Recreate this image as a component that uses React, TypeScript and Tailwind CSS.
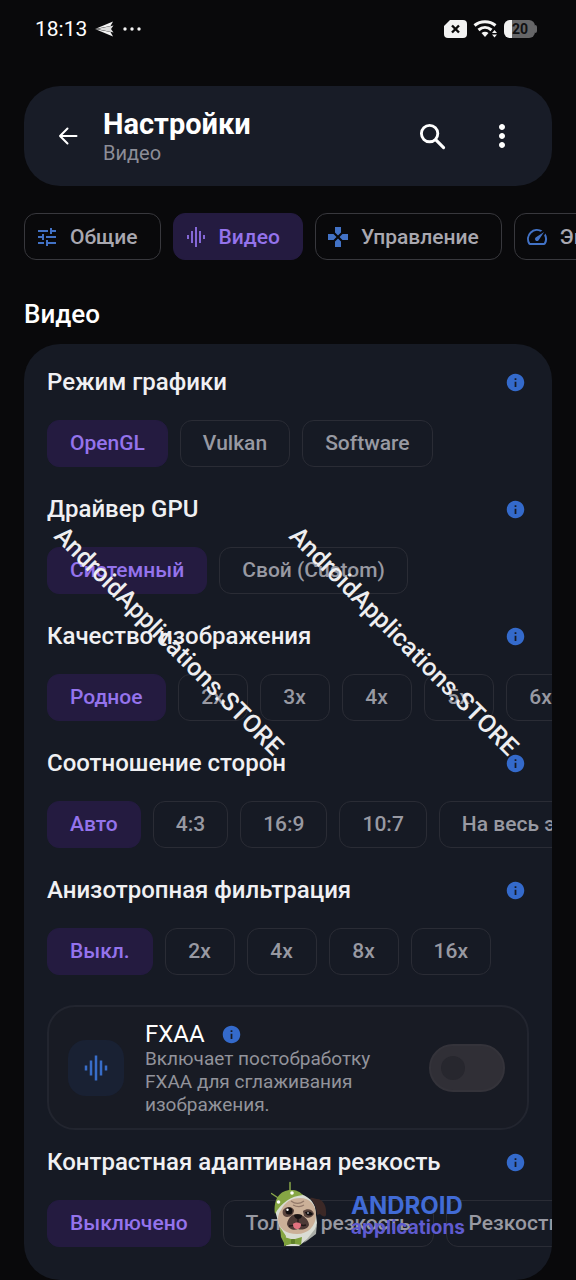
import { useState } from "react";
import type { ComponentType } from "react";
import {
  MdGamepad,
  MdGraphicEq,
  MdInfo,
  MdMoreVert,
  MdOutlineSpeed,
  MdTune,
} from "react-icons/md";

type Tab = {
  label: string;
  icon: ComponentType<{ size?: number; className?: string }>;
};

const tabs: Tab[] = [
  { label: "Общие", icon: MdTune },
  { label: "Видео", icon: MdGraphicEq },
  { label: "Управление", icon: MdGamepad },
  { label: "Эмуляция", icon: MdOutlineSpeed },
];

const groups = [
  { title: "Режим графики", options: ["OpenGL", "Vulkan", "Software"] },
  { title: "Драйвер GPU", options: ["Системный", "Свой (Custom)"] },
  {
    title: "Качество изображения",
    options: ["Родное", "2x", "3x", "4x", "5x", "6x"],
  },
  {
    title: "Соотношение сторон",
    options: ["Авто", "4:3", "16:9", "10:7", "На весь экран"],
  },
  {
    title: "Анизотропная фильтрация",
    options: ["Выкл.", "2x", "4x", "8x", "16x"],
  },
];

const sharpness = {
  title: "Контрастная адаптивная резкость",
  options: ["Выключено", "Только резкость", "Резкость и масштаб"],
};

function StatusBar() {
  return (
    <div className="flex h-[58px] items-center justify-between pr-[39px] pl-[35px] text-white">
      <div className="flex items-center gap-2">
        <span className="pt-0.5 text-[21px]">18:13</span>
        <svg width="20" height="16" viewBox="0 0 20 16" aria-hidden="true">
          <path d="M0 8 18 .5 15.500 5z" fill="#f4f4f4" />
          <path d="M0 8 18 15.500 15.500 11z" fill="#f4f4f4" />
          <path d="m2 8 16.500-3.500L16 8l2.500 3.500z" fill="#dcdcdc" />
        </svg>
        <svg width="18" height="4" viewBox="0 0 18 4" fill="#f4f4f4" aria-hidden="true">
          <circle cx="2" cy="2" r="1.700" />
          <circle cx="9" cy="2" r="1.700" />
          <circle cx="16" cy="2" r="1.700" />
        </svg>
      </div>
      <div className="flex items-center gap-1.5">
        <svg width="23" height="18" viewBox="0 0 23 18" aria-hidden="true">
          <path
            d="M6 0h13a4 4 0 0 1 4 4v10a4 4 0 0 1-4 4H4a4 4 0 0 1-4-4V6z"
            fill="#f2f2f2"
          />
          <path d="m8 5.500 7 7m0-7-7 7" stroke="#0a0a0b" strokeWidth="2.400" />
        </svg>
        <svg width="25" height="18" viewBox="0 0 25 18" fill="none" aria-hidden="true">
          <path d="M1.500 5.500c6-5 15-5 21 0" stroke="#f4f4f4" strokeWidth="3" />
          <path d="M5.500 10c4-3.500 9-3.500 13 0" stroke="#f4f4f4" strokeWidth="3" />
          <path d="M8.500 13c2-1.700 5-1.700 7 0L12 17z" fill="#f4f4f4" />
          <path d="m19 13 2.500-3 2.500 3zM19 14.500l2.500 3 2.500-3z" fill="#f4f4f4" />
        </svg>
        <div className="flex items-center">
          <div className="flex h-[18px] w-[31px] items-center overflow-hidden rounded-md bg-[#666668]">
            <span className="h-full w-2 bg-[#f2f2f2]" />
            <span className="text-sm leading-none font-bold text-[#111113]">20</span>
          </div>
          <span className="h-2 w-0.5 rounded-r bg-[#666668]" />
        </div>
      </div>
    </div>
  );
}

function Header() {
  return (
    <header className="mx-6 mt-7 flex h-[100px] items-center rounded-[36px] bg-[#181c27] pr-[26px] pl-4">
      <button
        type="button"
        aria-label="Назад"
        className="flex size-14 items-center justify-center rounded-2xl text-white"
      >
        <svg width="20" height="18" viewBox="0 0 20 18" fill="none" aria-hidden="true">
          <path
            d="M18.500 9H2m7.500-7.500L2 9l7.500 7.500"
            stroke="currentColor"
            strokeWidth="2"
            strokeLinecap="round"
            strokeLinejoin="round"
          />
        </svg>
      </button>
      <div className="ml-[7px] flex-1 pt-0.5">
        <h1 className="text-[29px] leading-8 font-bold text-white">Настройки</h1>
        <p className="text-xl leading-[26px] text-[#8c8d97]">Видео</p>
      </div>
      <button type="button" aria-label="Поиск" className="flex size-12 items-center justify-center text-white">
        <svg width="27" height="27" viewBox="0 0 28 28" fill="none" aria-hidden="true">
          <circle cx="11" cy="11" r="8.500" stroke="currentColor" strokeWidth="3" />
          <path d="m17.500 17.500 8 8" stroke="currentColor" strokeWidth="3.200" strokeLinecap="round" />
        </svg>
      </button>
      <button type="button" aria-label="Ещё" className="ml-[22px] flex size-12 items-center justify-center text-white">
        <MdMoreVert size={36} />
      </button>
    </header>
  );
}

function Tabs() {
  const [active, setActive] = useState("Видео");

  return (
    <nav className="mt-[27px] flex gap-3 overflow-x-auto px-6 [scrollbar-width:none]">
      {tabs.map(({ label, icon: Icon }) => {
        const selected = label === active;
        return (
          <button
            key={label}
            type="button"
            aria-pressed={selected}
            onClick={() => setActive(label)}
            className={`flex h-[47px] shrink-0 items-center gap-[11px] rounded-xl border pr-[22px] pl-2.5 text-[21px] font-medium ${
              selected
                ? "border-[#241b40] bg-[#241b40] text-[#9473ec]"
                : "border-[#38383d] text-[#a9a8b0]"
            }`}
          >
            <Icon size={24} className={selected ? "text-[#8467d6]" : "text-[#4272c6]"} />
            <span className="pt-0.5">{label}</span>
          </button>
        );
      })}
    </nav>
  );
}

function InfoButton({ about }: { about: string }) {
  return (
    <button type="button" aria-label={`Справка: ${about}`} className="text-[#346acb]">
      <MdInfo size={21} />
    </button>
  );
}

function OptionGroup({ title, options }: { title: string; options: string[] }) {
  const [value, setValue] = useState(options[0]);

  return (
    <section>
      <div className="flex h-[30px] items-center justify-between pr-[26px]">
        <h3 className="text-2xl font-medium text-[#f0f0f3]">{title}</h3>
        <InfoButton about={title} />
      </div>
      <div className="mt-[23px] flex gap-3 overflow-x-auto [scrollbar-width:none]">
        {options.map((option) => (
          <button
            key={option}
            type="button"
            aria-pressed={option === value}
            onClick={() => setValue(option)}
            className={`h-[47px] min-w-[70px] shrink-0 rounded-xl border px-[22px] text-[21px] font-medium whitespace-nowrap ${
              option === value
                ? "border-[#241b40] bg-[#241b40] text-[#9473ec]"
                : "border-[#2a2c35] text-[#9899a2]"
            }`}
          >
            {option}
          </button>
        ))}
      </div>
    </section>
  );
}

function FxaaCard() {
  const [enabled, setEnabled] = useState(false);

  return (
    <div className="mt-[30px] mr-[23px] mb-[17px] flex h-[125px] items-center rounded-[28px] border-2 border-[#22252f] bg-[#181b24] pr-[22px] pl-[19px]">
      <div className="flex size-14 shrink-0 items-center justify-center rounded-[18px] bg-[#192133] text-[#386dc8]">
        <MdGraphicEq size={30} />
      </div>
      <div className="ml-[21px] flex-1 pt-0.5">
        <div className="flex h-[26px] items-center gap-4">
          <label htmlFor="fxaa" className="text-2xl leading-[26px] text-white">
            FXAA
          </label>
          <InfoButton about="FXAA" />
        </div>
        <p className="max-w-60 text-[19px] leading-[23px] text-[#92939b]">
          Включает постобработку FXAA для сглаживания изображения.
        </p>
      </div>
      <label className="flex h-12 w-[76px] shrink-0 cursor-pointer items-center rounded-full border-2 border-[#34333a] bg-[#302f36] px-2.5 has-checked:justify-end">
        <input
          id="fxaa"
          type="checkbox"
          role="switch"
          checked={enabled}
          onChange={(e) => setEnabled(e.target.checked)}
          className="size-6 cursor-pointer appearance-none rounded-full bg-[#27272e] checked:bg-[#9473ec]"
        />
      </label>
    </div>
  );
}

function PugLogo() {
  return (
    <svg width="56" height="66" viewBox="0 0 56 66" aria-hidden="true">
      <g stroke="#87a548" strokeWidth="1.500" strokeLinecap="round">
        <path d="m.5 12.500 6 4M19 1.500v9" />
      </g>
      {/* hood */}
      <path d="M5 33C3 18 12 11 24 12c10 1 17 6 20 14l2 16-2 10-11 9-5 4H15L9 48z" fill="#d9dcd3" />
      <path d="M44 48l2-6-1 11-12 9z" fill="#a9aca6" />
      <path d="M4 33C2 18 9 9 20 9c6 0 9 2 12 5C20 15 10 22 4 33z" fill="#86a644" />
      <path d="M9 46l6 9-1 9-4-8z" fill="#86a644" />
      <circle cx="7.500" cy="21" r="1.800" fill="#fff" />
      <circle cx="21" cy="12" r="1.800" fill="#fff" />
      {/* face */}
      <path d="M10 29c4-8 10-12 19-12 10 0 16 7 16 17 0 11-8 19-19 19S7 47 7 38c0-4 1-6 3-9z" fill="#cbb098" />
      <path d="M39 17c3-1 5 1 7 1 6 0 10 7 9 16-1 3-4 1-6-1l-3 1c0-7-3-12-7-17z" fill="#3b2826" />
      <path d="M20 20c4 3 9 3 13 0M22 24c4 2 8 2 11 0" stroke="#927869" strokeWidth="1.200" fill="none" />
      <path d="M12 29c3-4 9-4 11 0 0 4-3 7-7 7s-5-4-4-7z" fill="#5a443d" />
      <path d="M32 30c4-3 10-2 11 3-2 4-7 5-10 2z" fill="#5a443d" />
      <circle cx="18" cy="30" r="3.500" fill="#120e0f" />
      <circle cx="16.500" cy="28.800" r="1.200" fill="#fff" />
      <path d="M34 31c3-1 6-1 8 2-2 2-5 2-7 0z" fill="#120e0f" />
      <circle cx="37" cy="32" r=".8" fill="#fff" />
      <path d="M26 33c6 0 12 6 12 11-2 5-8 5-11 4-4 2-10 0-11-5 1-6 5-10 10-10z" fill="#4d3a36" />
      <path d="M23 34c2-1 5-1 8 0 0 3-2 4-4 4s-4-2-4-4z" fill="#171213" />
      <path d="M27 38v4m-9 3c3 0 6-1 9-3 2 2 5 3 8 2" stroke="#211718" strokeWidth="1.400" fill="none" />
      <path d="M22 43c2-2 6-2 8 0 0 4-2 5-4 5s-4-1-4-5z" fill="#e2727f" />
      {/* bow tie */}
      <path d="m13 56 7 2h4l7-2-1 8-6-1h-4l-7 2z" fill="#7d9f3b" />
      <rect x="20" y="58" width="4" height="5" rx="1" fill="#5f7f29" />
    </svg>
  );
}

function Watermark({ className }: { className: string }) {
  return (
    <span
      className={`pointer-events-none absolute origin-top-left rotate-45 font-['Roboto',sans-serif] text-[25px] leading-8 font-medium whitespace-nowrap text-[#eeeef0] ${className}`}
    >
      AndroidApplications.STORE
    </span>
  );
}

export default function App() {
  return (
    <div className="relative min-h-screen overflow-hidden bg-[#09090b] font-['Roboto',sans-serif]">
      <StatusBar />
      <Header />
      <Tabs />
      <main className="px-6">
        <h2 className="mt-[38px] text-[26px] leading-8 font-medium text-white">Видео</h2>
        <div className="mt-[14px] overflow-hidden rounded-[36px] bg-[#161a24] pt-[23px] pb-[33px] pl-[23px]">
          <div className="flex flex-col gap-[27px]">
            {groups.map((group) => (
              <OptionGroup key={group.title} {...group} />
            ))}
          </div>
          <FxaaCard />
          <OptionGroup {...sharpness} />
        </div>
      </main>

      <Watermark className="top-[520px] left-[70px]" />
      <Watermark className="top-[520px] left-[305px]" />
      <div className="pointer-events-none absolute top-[1181px] left-[271px] flex items-center gap-6">
        <PugLogo />
        <div className="pt-1 font-['Inter',sans-serif] text-[#416bd6]">
          <div className="text-2xl leading-6 font-bold">ANDROID</div>
          <div className="text-[19px] leading-5 font-bold text-[#5f5bd0]">applications</div>
        </div>
      </div>
    </div>
  );
}
